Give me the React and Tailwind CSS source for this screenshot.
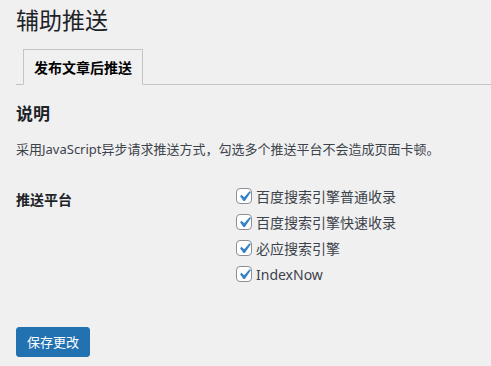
import React, { useState } from 'react';

const platforms = [
  { id: 'baidu', label: '百度搜索引擎普通收录' },
  { id: 'baidu_fast', label: '百度搜索引擎快速收录' },
  { id: 'bing', label: '必应搜索引擎' },
  { id: 'indexnow', label: 'IndexNow' },
];

const CheckBox = ({ checked, onChange }) => (
  <span
    onClick={onChange}
    className="w-4 h-4 shrink-0 rounded-[4px] border border-[#8c8f94] bg-white flex items-center justify-center cursor-pointer overflow-visible"
  >
    {checked && (
      <svg width="21" height="21" viewBox="0 0 20 20" className="shrink-0 -m-[3px]">
        <path
          d="M14.83 4.89l1.34.94-5.81 8.38H9.02L5.78 9.67l1.34-1.25 2.57 2.4z"
          fill="#3582c4"
        />
      </svg>
    )}
  </span>
);

const App = () => {
  const [checked, setChecked] = useState({
    baidu: true,
    baidu_fast: true,
    bing: true,
    indexnow: true,
  });

  const toggle = (id) => setChecked({ ...checked, [id]: !checked[id] });

  return (
    <div
      className="min-h-[366px] bg-[#f0f0f1] text-[#3c434a] pl-4 overflow-hidden"
      style={{ fontFamily: '"Noto Sans", "Noto Sans CJK SC", sans-serif' }}
    >
      <h1 className="pt-[5px] text-[23px] leading-[30px] font-normal text-[#1d2327]">辅助推送</h1>

      <div className="mt-[14px] border-b border-[#c3c4c7] flex">
        <div className="ml-[7px] -mb-px h-[36px] w-[120px] border border-[#c3c4c7] border-b-[#f0f0f1] bg-[#f0f0f1] pl-[10px] flex items-center text-[14px] font-bold text-[#000]">
          发布文章后推送
        </div>
      </div>

      <h2 className="mt-[17px] text-[17px] leading-[24px] font-bold text-[#1d2327]">说明</h2>
      <p className="mt-[13px] text-[13px] leading-[20px]">
        采用JavaScript异步请求推送方式，勾选多个推送平台不会造成页面卡顿。
      </p>

      <div className="mt-[24px] flex">
        <div className="w-[220px] text-[14px] leading-[26px] font-bold text-[#1d2327] pt-[4px]">推送平台</div>
        <div className="flex flex-col">
          {platforms.map((p) => (
            <label key={p.id} className="h-[26px] flex items-center gap-[4px] text-[14px] text-[#3c434a]">
              <CheckBox checked={checked[p.id]} onChange={() => toggle(p.id)} />
              <span>{p.label}</span>
            </label>
          ))}
        </div>
      </div>

      <button className="mt-[40px] h-[30px] px-[10px] rounded-[3px] bg-[#2271b1] text-white text-[13px] leading-[28px] border border-[#2271b1]">
        保存更改
      </button>
    </div>
  );
};

export default App;
